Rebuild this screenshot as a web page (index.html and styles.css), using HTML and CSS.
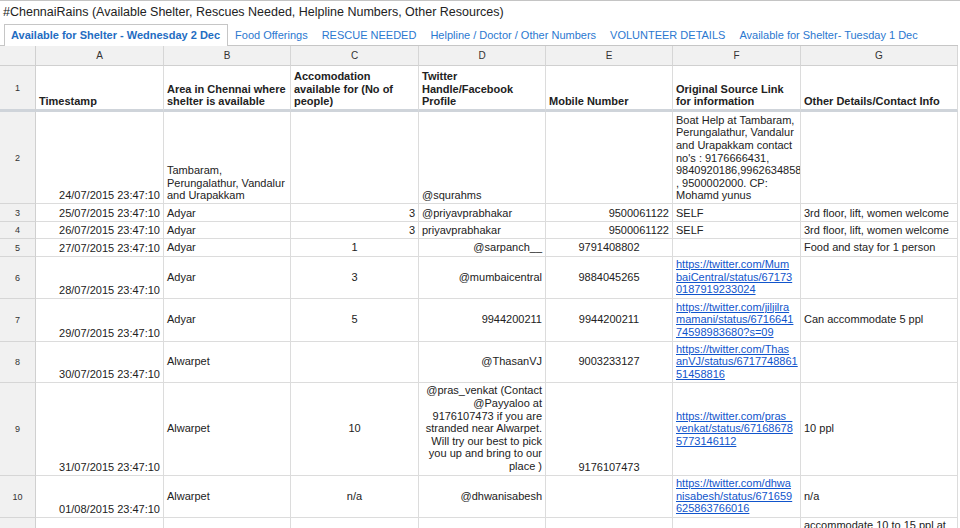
FILE: index.html
```html
<!DOCTYPE html>
<html>
<head>
<meta charset="utf-8">
<link rel="stylesheet" href="styles.css">
</head>
<body>
<div class="title">#ChennaiRains (Available Shelter, Rescues Needed, Helpline Numbers, Other Resources)</div>
<div class="tabs">
  <div class="tab active">Available for Shelter - Wednesday 2 Dec</div>
  <div class="tab">Food Offerings</div>
  <div class="tab">RESCUE NEEDED</div>
  <div class="tab">Helpline / Doctor / Other Numbers</div>
  <div class="tab">VOLUNTEER DETAILS</div>
  <div class="tab">Available for Shelter- Tuesday 1 Dec</div>
</div>
<div class="sheet">
  <!-- column headers -->
  <div class="corner"></div>
  <div class="colh">A</div>
  <div class="colh">B</div>
  <div class="colh">C</div>
  <div class="colh">D</div>
  <div class="colh">E</div>
  <div class="colh">F</div>
  <div class="colh">G</div>

  <!-- row 1 -->
  <div class="rowh frz">1</div>
  <div class="c bot hd frz"><p>Timestamp</p></div>
  <div class="c bot hd frz"><p>Area in Chennai where<br>shelter is available</p></div>
  <div class="c bot hd frz"><p>Accomodation<br>available for (No of<br>people)</p></div>
  <div class="c bot hd frz"><p>Twitter<br>Handle/Facebook<br>Profile</p></div>
  <div class="c bot hd frz"><p>Mobile Number</p></div>
  <div class="c bot hd frz"><p>Original Source Link<br>for information</p></div>
  <div class="c bot hd frz"><p>Other Details/Contact Info</p></div>

  <!-- row 2 -->
  <div class="rowh">2</div>
  <div class="c bot"><p class="r">24/07/2015 23:47:10</p></div>
  <div class="c bot"><p>Tambaram,<br>Perungalathur, Vandalur<br>and Urapakkam</p></div>
  <div class="c bot"><p></p></div>
  <div class="c bot"><p>@squrahms</p></div>
  <div class="c bot"><p></p></div>
  <div class="c bot"><p>Boat Help at Tambaram,<br>Perungalathur, Vandalur<br>and Urapakkam contact<br>no's : 9176666431,<br>9840920186,9962634858<br>, 9500002000. CP:<br>Mohamd yunus</p></div>
  <div class="c bot"><p></p></div>

  <!-- row 3 -->
  <div class="rowh">3</div>
  <div class="c bot"><p class="r">25/07/2015 23:47:10</p></div>
  <div class="c bot"><p>Adyar</p></div>
  <div class="c bot"><p class="r">3</p></div>
  <div class="c bot"><p>@priyavprabhakar</p></div>
  <div class="c bot"><p class="r">9500061122</p></div>
  <div class="c bot"><p>SELF</p></div>
  <div class="c bot"><p>3rd floor, lift, women welcome</p></div>

  <!-- row 4 -->
  <div class="rowh">4</div>
  <div class="c bot"><p class="r">26/07/2015 23:47:10</p></div>
  <div class="c bot"><p>Adyar</p></div>
  <div class="c bot"><p class="r">3</p></div>
  <div class="c bot"><p>priyavprabhakar</p></div>
  <div class="c bot"><p class="r">9500061122</p></div>
  <div class="c bot"><p>SELF</p></div>
  <div class="c bot"><p>3rd floor, lift, women welcome</p></div>

  <!-- row 5 -->
  <div class="rowh">5</div>
  <div class="c bot"><p class="r">27/07/2015 23:47:10</p></div>
  <div class="c mid"><p>Adyar</p></div>
  <div class="c mid"><p class="ctr">1</p></div>
  <div class="c mid"><p class="r">@sarpanch__</p></div>
  <div class="c mid"><p class="ctr">9791408802</p></div>
  <div class="c mid"><p></p></div>
  <div class="c mid"><p>Food and stay for 1 person</p></div>

  <!-- row 6 -->
  <div class="rowh">6</div>
  <div class="c bot"><p class="r">28/07/2015 23:47:10</p></div>
  <div class="c mid"><p>Adyar</p></div>
  <div class="c mid"><p class="ctr">3</p></div>
  <div class="c mid"><p class="r">@mumbaicentral</p></div>
  <div class="c mid"><p class="ctr">9884045265</p></div>
  <div class="c mid"><p><a href="#">https://twitter.com/Mum<br>baiCentral/status/67173<br>0187919233024</a></p></div>
  <div class="c mid"><p></p></div>

  <!-- row 7 -->
  <div class="rowh">7</div>
  <div class="c bot"><p class="r">29/07/2015 23:47:10</p></div>
  <div class="c mid"><p>Adyar</p></div>
  <div class="c mid"><p class="ctr">5</p></div>
  <div class="c mid"><p class="r">9944200211</p></div>
  <div class="c mid"><p class="ctr">9944200211</p></div>
  <div class="c mid"><p><a href="#">https://twitter.com/jiljilra<br>mamani/status/6716641<br>74598983680?s=09</a></p></div>
  <div class="c mid"><p>Can accommodate 5 ppl</p></div>

  <!-- row 8 -->
  <div class="rowh">8</div>
  <div class="c bot"><p class="r">30/07/2015 23:47:10</p></div>
  <div class="c mid"><p>Alwarpet</p></div>
  <div class="c mid"><p></p></div>
  <div class="c mid"><p class="r">@ThasanVJ</p></div>
  <div class="c mid"><p class="ctr">9003233127</p></div>
  <div class="c mid"><p><a href="#">https://twitter.com/Thas<br>anVJ/status/6717748861<br>51458816</a></p></div>
  <div class="c mid"><p></p></div>

  <!-- row 9 -->
  <div class="rowh">9</div>
  <div class="c bot"><p class="r">31/07/2015 23:47:10</p></div>
  <div class="c mid"><p>Alwarpet</p></div>
  <div class="c mid"><p class="ctr">10</p></div>
  <div class="c mid"><p class="r">@pras_venkat (Contact<br>@Payyaloo at<br>9176107473 if you are<br>stranded near Alwarpet.<br>Will try our best to pick<br>you up and bring to our<br>place )</p></div>
  <div class="c bot"><p class="ctr">9176107473</p></div>
  <div class="c mid"><p><a href="#">https://twitter.com/pras_<br>venkat/status/67168678<br>5773146112</a></p></div>
  <div class="c mid"><p>10 ppl</p></div>

  <!-- row 10 -->
  <div class="rowh">10</div>
  <div class="c bot"><p class="r">01/08/2015 23:47:10</p></div>
  <div class="c mid"><p>Alwarpet</p></div>
  <div class="c mid"><p class="ctr">n/a</p></div>
  <div class="c mid"><p class="r">@dhwanisabesh</p></div>
  <div class="c mid"><p></p></div>
  <div class="c mid"><p><a href="#">https://twitter.com/dhwa<br>nisabesh/status/671659<br>625863766016</a></p></div>
  <div class="c mid"><p>n/a</p></div>

  <!-- row 11 -->
  <div class="rowh">11</div>
  <div class="c top"><p></p></div>
  <div class="c top"><p></p></div>
  <div class="c top"><p></p></div>
  <div class="c top"><p></p></div>
  <div class="c top"><p></p></div>
  <div class="c top"><p></p></div>
  <div class="c top"><p>accommodate 10 to 15 ppl at<br>our place, food available</p></div>
</div>
</body>
</html>
```

FILE: styles.css
```css
html, body {
  margin: 0;
  padding: 0;
  background: #ffffff;
  font-family: "Liberation Sans", Arial, sans-serif;
  color: #222222;
  overflow: hidden;
}

.title {
  height: 23px;
  border-top: 1px solid #c4c4c4;
  font-size: 12.5px;
  line-height: 23px;
  padding-left: 3px;
  color: #222222;
  white-space: nowrap;
}

.tabs {
  display: flex;
  height: 22px;
  padding-left: 4px;
  align-items: stretch;
}

.tab {
  font-size: 11px;
  line-height: 22px;
  color: #2b78d0;
  padding: 0 7px;
  white-space: nowrap;
}

.tab.active {
  background: #ffffff;
  border: 1px solid #c6c6c6;
  border-bottom: none;
  line-height: 21px;
  color: #1f6dc2;
  font-weight: bold;
  padding-left: 6px;
  padding-right: 7px;
}

.sheet {
  display: grid;
  width: 958px;
  grid-template-columns: 36px 128px 127px 128px 127px 127px 128px 157px;
  grid-template-rows: 20px 46px 92px 18px 17px 18px 42px 43px 41px 93px 42px 60px;
  border-top: 1px solid #c6c6c6;
  margin-top: -1px;
}

.sheet > div {
  box-sizing: border-box;
  overflow: hidden;
}

.corner {
  background: #f1f1f1;
  border-right: 1px solid #d0d0d0;
  border-bottom: 1px solid #d0d0d0;
}

.colh {
  background: #f1f1f1;
  border-right: 1px solid #d6d6d6;
  border-bottom: 1px solid #d0d0d0;
  font-size: 10px;
  color: #333333;
  text-align: center;
  line-height: 19px;
}

.rowh {
  background: #f1f1f1;
  border-right: 1px solid #d0d0d0;
  border-bottom: 1px solid #d6d6d6;
  font-size: 9px;
  color: #333333;
  display: flex;
  align-items: center;
  justify-content: center;
}

.c {
  border-right: 1px solid #dcdcdc;
  border-bottom: 1px solid #dcdcdc;
  padding: 0 3px 1px 3px;
  display: flex;
  flex-direction: column;
  font-size: 11px;
  line-height: 12.6px;
  color: #222222;
}

.c p {
  margin: 0;
  white-space: nowrap;
}

.frz {
  border-bottom: 3px solid #cfd4da;
}

.hd {
  font-weight: bold;
}

.bot { justify-content: flex-end; }
.mid { justify-content: center; }
.top { justify-content: flex-start; padding-top: 1px; }

.r { text-align: right; }
.ctr { text-align: center; }

.c a {
  color: #1155cc;
  text-decoration: underline;
}
```
